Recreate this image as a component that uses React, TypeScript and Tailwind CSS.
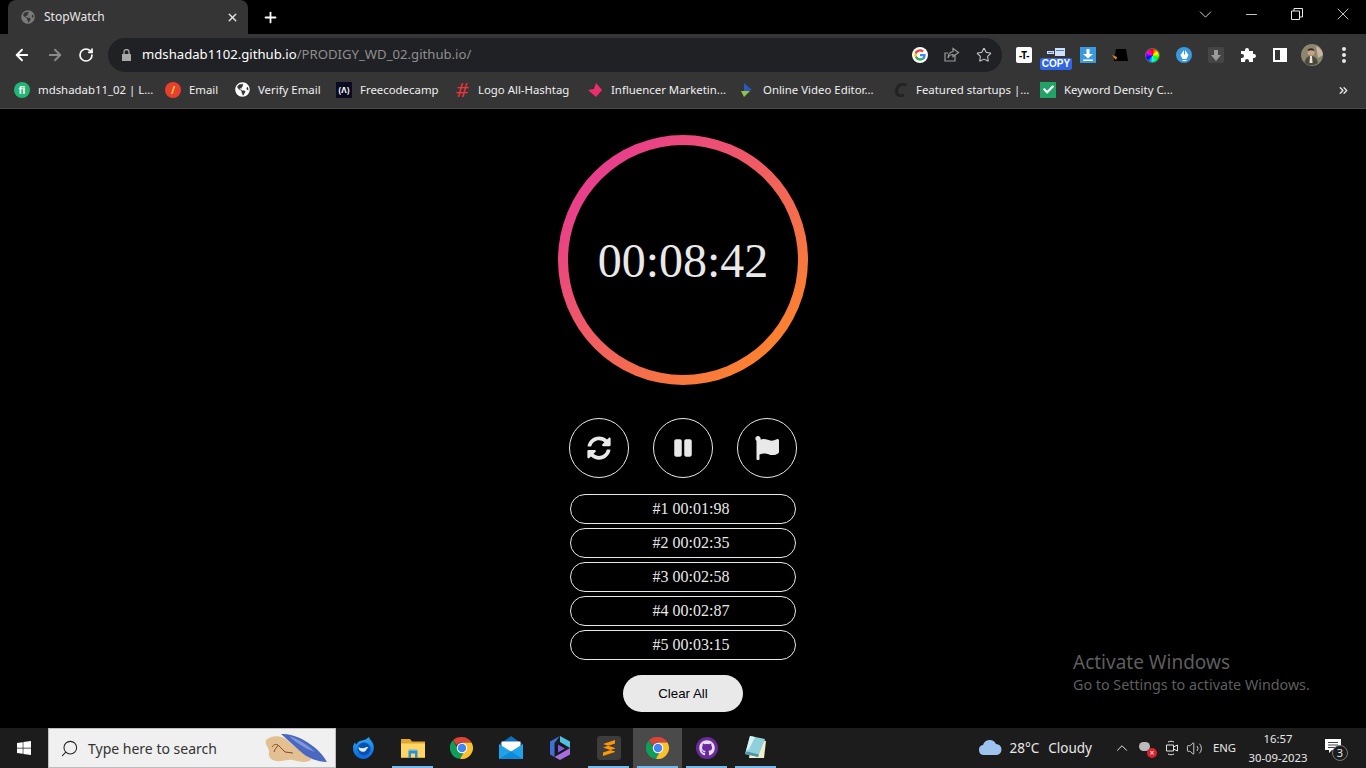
import { ArrowLeft, ArrowRight, RotateCw, Star, Search, ChevronUp, ChevronDown, Minus, X, Plus, ChevronsRight, Volume2 } from "lucide-react";
import { FaSyncAlt, FaPause, FaFlag, FaWindows, FaGithub, FaCheck, FaGlobeAmericas } from "react-icons/fa";

const laps = ["#1 00:01:98", "#2 00:02:35", "#3 00:02:58", "#4 00:02:87", "#5 00:03:15"];

// ── brand marks ─────────────────────────────────────────────────────────────

function GoogleG() {
  return (
    <svg width="16" height="16" viewBox="0 0 48 48">
      <circle cx="24" cy="24" r="24" fill="#fff" />
      <path fill="#4285f4" d="M41 24.5c0-1.3-.1-2.3-.3-3.5H24v6.5h9.6c-.4 2.3-1.7 4.2-3.6 5.5l5.6 4.3c3.3-3 5.4-7.5 5.4-12.8z" />
      <path fill="#34a853" d="M24 41c4.6 0 8.5-1.5 11.6-4.7L30 32c-1.600 1.100-3.600 1.800-6 1.800-4.500 0-8.400-3-9.700-7.200l-5.800 4.500C11.300 37 17.200 41 24 41z" />
      <path fill="#fbbc05" d="M14.300 26.600c-.7-2-.7-3.900 0-5.800l-5.800-4.500c-2.300 4.800-2.300 10 0 14.800z" />
      <path fill="#ea4335" d="M24 13.800c2.600 0 4.800.9 6.500 2.500l4.900-4.900C32.400 8.600 28.500 7 24 7 17.200 7 11.300 11 8.500 16.300l5.800 4.500c1.300-4.100 5.200-7 9.700-7z" />
    </svg>
  );
}

function ChromeLogo() {
  return (
    <svg width="24" height="24" viewBox="0 0 48 48">
      <path fill="#db4437" d="M24 2a22 22 0 0 1 19 11H24a11 11 0 0 0-10 6.500L6 8.500A22 22 0 0 1 24 2z" />
      <path fill="#0f9d58" d="M6 8.500l9 15.500a11 11 0 0 0 12.500 8.500L20 45.700A22 22 0 0 1 6 8.500z" />
      <path fill="#fbc02d" d="M43 13a22 22 0 0 1-23 32.700L29.500 29A11 11 0 0 0 24 13z" />
      <circle cx="24" cy="24" r="10.500" fill="#fff" />
      <circle cx="24" cy="24" r="8.500" fill="#4285f4" />
    </svg>
  );
}

function FirefoxDev() {
  return (
    <svg width="24" height="24" viewBox="0 0 24 24">
      <defs>
        <linearGradient id="ff" x1="0" y1="0" x2="0" y2="1">
          <stop offset="0" stopColor="#2aa8f5" />
          <stop offset="1" stopColor="#0a66dc" />
        </linearGradient>
      </defs>
      <path fill="url(#ff)" d="M17 1c.5 2.500 2 3 3.500 5.500 2 3.500 1.800 8.500-1 12C17 21.500 14 23 11.500 23 6 23 1 18.500 1 12.500 1 9.800 1.800 7.800 3 6.500c.3 1 .8 1.500 1.500 2C5.500 6 8 4.500 10 4.500c2.500-.3 5-1.500 7-3.500z" />
      <circle cx="12" cy="13" r="6.500" fill="#0b4fb0" />
      <path fill="#dff1ff" d="M6.500 11c2 1.500 5.500 1.500 7 .5 1-.7 2.500-.5 3 .5-1 0-1.500.5-2 1.500-1 2.500-4.500 3-6.500 1.200C7 13.800 6.500 12.500 6.500 11z" />
    </svg>
  );
}

function FolderIcon() {
  return (
    <svg width="24" height="24" viewBox="0 0 24 24">
      <path fill="#e0a82e" d="M0 3h9l2 2.500h13V22H0z" />
      <path fill="#ffd666" d="M0 7.500h24V21H0z" />
      <path fill="#2a8fd8" d="M7.500 15h9v7h-2.500v-4.500h-4V22H7.500z" />
      <path fill="#5fb6ee" d="M7.500 13.500h9V15h-9z" />
    </svg>
  );
}

function MailIcon() {
  return (
    <svg width="24" height="24" viewBox="0 0 24 24">
      <path fill="#0c6fc0" d="M12 0l12 8.500H0z" />
      <path fill="#fff" d="M2.500 5.500h19V11L12 16 2.500 11z" />
      <path fill="#1fa2e8" d="M0 8l12 7.500L24 8v15H0z" />
      <path fill="#0d8ad8" d="M0 23l12-7.500L24 23z" />
    </svg>
  );
}

function HexIcon() {
  return (
    <svg width="22" height="24" viewBox="0 0 22 24">
      <path fill="#3f6fd8" d="M11 0L1 5.500v13l4.500 2.500V7z" />
      <path fill="#4ec2e0" d="M11 0l10 5.500V12l-5-3-5-3z" />
      <path fill="#a56ee0" d="M21 12v6.500L11 24l-5.500-3 10.500-6z" />
      <path fill="#16161c" d="M6.500 9.500l4.500-2.500 5 2.800v4.700L11 17l-4.500-2.500z" />
      <path fill="#7a5cd8" d="M9 8.500l7 4-7 4z" />
    </svg>
  );
}

function SublimeIcon() {
  return (
    <div className="w-6 h-6 rounded-[3px] bg-[#3d3d3d] flex items-center justify-center">
      <svg width="14" height="16" viewBox="0 0 14 16">
        <path fill="#ff9800" d="M13 0v3.500L1 7.500V4zM1 7.500l12 4V8L1 4zM13 8.500V12L1 16v-3.500z" />
      </svg>
    </div>
  );
}

function NotepadIcon() {
  return (
    <svg width="24" height="26" viewBox="0 0 24 26">
      <path fill="#f2eeca" d="M8 3l14 3-2 17H5z" />
      <path fill="#8fd0dc" d="M6 1l15 3-7 18-13-3z" />
      <path fill="#d9f2f4" d="M6 1l5 1-6 12-3 2z" />
      <path fill="#4f93a8" d="M1 19l13 3 1-2.500-12-3z" />
    </svg>
  );
}

function SearchArt() {
  return (
    <svg width="66" height="32" viewBox="0 0 66 32">
      <path fill="#e3c092" d="M3 8c4-4 12-5 18-2 5 3 10 9 18 13 5 3 9 6 9 9-4 3-12 2-18 0-5-1-12 2-17 1-6-1-8-5-7-9 1-3-5-8-3-12z" />
      <path fill="none" stroke="#8a4a2a" strokeWidth="1" d="M9 15c2-3 4-3 6-2-1 3-3 3-4 7M15 13l7 7 8 1" />
      <path fill="#4a68bf" d="M18 2c10-1 24 5 33 13 5 4 9 8 13 15-9 0-20-4-27-11C30 13 24 7 18 2z" />
      <path fill="#7f98dc" d="M26 4c9 3 19 9 26 16-9-3-19-9-26-16z" />
    </svg>
  );
}

function CopyExt() {
  return (
    <div className="mt-[7px] flex flex-col items-center">
      <svg width="20" height="9" viewBox="0 0 20 9">
        <path fill="#cfe0f8" d="M1 3h7v3H1zM9 0h10v8H9z" />
        <path fill="#4a80d8" d="M10 2h8v1h-8zM2 4h5v1H2z" />
      </svg>
      <span className="mt-[1px] bg-[#2f66e6] text-white font-bold text-[10px] leading-[12px] px-[2px] rounded-[2px] [font-family:'Liberation_Sans',sans-serif]">COPY</span>
    </div>
  );
}

function ColorWheel() {
  return (
    <div className="w-[13px] h-[13px] rounded-full bg-[conic-gradient(#f00,#ff0,#0f0,#0ff,#00f,#f0f,#f00)] ring-1 ring-[#666]" />
  );
}

function Avatar() {
  return (
    <svg width="22" height="22" viewBox="0 0 22 22">
      <circle cx="11" cy="11" r="11" fill="#8a8670" />
      <path fill="#c9b6a0" d="M15 2a11 11 0 0 1 7 9l-5 3z" />
      <circle cx="10" cy="8" r="3.500" fill="#caa184" />
      <path fill="#2c2a24" d="M6.500 7c0-3 6-4 7 0-2-1-5-1-7 0z" />
      <path fill="#4b4a3a" d="M3.500 19c1-5 3-7 6.500-7s6 2 7 7a11 11 0 0 1-13.500 0z" />
      <path fill="#e8e2d8" d="M9 12h2l.5 7h-3z" />
    </svg>
  );
}

// ── browser chrome ──────────────────────────────────────────────────────────

const bookmarks = [
  { label: "mdshadab11_02 | L...", w: "w-[151px]", icon: <span className="w-4 h-4 rounded-full bg-[#22b573] text-white text-[10px] leading-4 text-center font-bold">fi</span> },
  { label: "Email", w: "w-[69px]", icon: <span className="w-4 h-4 rounded-full bg-[#e8402c] text-[#ffd34d] text-[10px] leading-4 text-center font-bold">/</span> },
  { label: "Verify Email", w: "w-[102px]", icon: <FaGlobeAmericas size={15} className="text-white" /> },
  { label: "Freecodecamp", w: "w-[118px]", icon: <span className="w-4 h-4 bg-[#0a0a23] text-white text-[8px] leading-4 text-center font-bold">(Λ)</span> },
  { label: "Logo All-Hashtag", w: "w-[133px]", icon: <span className="w-4 h-4 text-[#f0323c] text-[20px] leading-4 text-center italic">#</span> },
  { label: "Influencer Marketin...", w: "w-[152px]", icon: <svg width="16" height="16" viewBox="0 0 16 16"><path fill="#ee2d6e" d="M9 1l6 7-6 7-8-7 6-1z" /></svg> },
  { label: "Online Video Editor...", w: "w-[153px]", icon: <svg width="16" height="16" viewBox="0 0 16 16"><path fill="#2a57c8" d="M5 1l8 7-8 2z" /><path fill="#8cc63f" d="M2 9h9l-6 6z" /></svg> },
  { label: "Featured startups |...", w: "w-[148px]", icon: <span className="w-4 h-4 text-[#222] text-[20px] leading-4 text-center italic font-bold">C</span> },
  { label: "Keyword Density C...", w: "w-[150px]", icon: <span className="w-4 h-4 bg-[#21a366] flex items-center justify-center"><FaCheck size={11} className="text-white" /></span> },
];

function ExtCell({ children }: { children: React.ReactNode }) {
  return <div className="w-8 h-[34px] flex items-center justify-center shrink-0">{children}</div>;
}

function TitleBar() {
  return (
    <div className="h-[34px] bg-black flex relative">
      <div className="ml-2 w-[240px] h-[34px] bg-[#353535] rounded-t-lg flex items-center pl-[13px] pr-[9px]">
        <FaGlobeAmericas size={14} className="text-[#7a7a7a]" />
        <span className="ml-[9px] text-xs text-[#e8e8e8] flex-1">StopWatch</span>
        <X size={13} strokeWidth={2.5} className="text-[#e3e3e3]" />
      </div>
      <Plus size={17} strokeWidth={2.5} className="ml-[14px] mt-[9px] text-white" />
      <div className="flex-1" />
      <div className="flex items-center h-7 text-[#e8e8e8]">
        <div className="w-[46px] flex justify-center"><ChevronDown size={21} strokeWidth={1} /></div>
        <div className="w-[46px] flex justify-center"><Minus size={17} strokeWidth={1.2} /></div>
        <div className="w-[46px] flex justify-center">
          <svg width="12" height="12" viewBox="0 0 12 12" fill="none" stroke="currentColor">
            <path d="M.5 3h8v8.500h-8zM3 3V.5h8.500V9H9" />
          </svg>
        </div>
        <div className="w-[46px] flex justify-center"><X size={20} strokeWidth={1} /></div>
      </div>
    </div>
  );
}

function Toolbar() {
  return (
    <div className="h-[38px] bg-[#353535] flex items-end">
      <div className="w-[108px] h-[34px] flex items-center pl-[13px]">
        <ArrowLeft size={18} strokeWidth={2.5} className="text-white" />
        <ArrowRight size={18} strokeWidth={2.5} className="ml-[15px] text-[#8a8a8a]" />
        <RotateCw size={16} strokeWidth={2.5} className="ml-[14px] text-white" />
      </div>
      <div className="w-[894px] h-[34px] rounded-full bg-[#202124] flex items-center pl-[14px] pr-[10px]">
        <svg width="9" height="12" viewBox="0 0 9 12" fill="#a8a8a8">
          <path d="M0 5h9v7H0z" />
          <path d="M2 5V3a2.500 2.500 0 0 1 5 0v2" fill="none" stroke="#a8a8a8" strokeWidth="1.300" />
        </svg>
        <span className="ml-[11px] flex-1 text-[13.15px] text-white">
          mdshadab1102.github.io<span className="text-[#8f8f8f]">/PRODIGY_WD_02.github.io/</span>
        </span>
        <GoogleG />
        <svg width="16" height="16" viewBox="0 0 16 16" fill="none" stroke="#9a9a9a" strokeWidth="1.200" className="ml-4">
          <path d="M11 7.500V14H1V6h3M9 1.500l5.500 4-5.500 4V7.500C6.500 7.500 5 8.500 4 11c0-4 2-6 5-6.500z" />
        </svg>
        <Star size={16} strokeWidth={1.600} className="ml-4 text-[#c8c8c8]" />
      </div>
      <div className="h-[34px] flex items-center pl-[6px]">
        <ExtCell>
          <span className="w-4 h-4 rounded-[2px] bg-white text-black text-[10px] leading-4 text-center font-bold tracking-tighter">-T-</span>
        </ExtCell>
        <ExtCell><CopyExt /></ExtCell>
        <ExtCell>
          <span className="w-4 h-4 bg-[#3a9ae0] flex items-center justify-center">
            <svg width="10" height="12" viewBox="0 0 10 12"><path fill="#fff" d="M3.500 0h3v5H10L5 9.500 0 5h3.500zM0 10.500h10V12H0z" /></svg>
          </span>
        </ExtCell>
        <ExtCell>
          <svg width="16" height="12" viewBox="0 0 16 12"><path fill="#000" d="M4 0h10l2 12H2z" /><path fill="#f28a1a" d="M0 6l5 2-1 3z" /></svg>
        </ExtCell>
        <ExtCell><ColorWheel /></ExtCell>
        <ExtCell>
          <span className="w-4 h-4 rounded-full bg-[#3a9ae0] flex items-center justify-center">
            <svg width="9" height="11" viewBox="0 0 9 11"><path fill="#fff" d="M4 0v4.500h1V0l3.500 5L6.500 9h-4L.5 5zM2.500 10h4v1h-4z" /></svg>
          </span>
        </ExtCell>
        <ExtCell>
          <span className="w-4 h-4 rounded-[2px] bg-[#454545] flex items-center justify-center">
            <svg width="10" height="11" viewBox="0 0 10 11"><path fill="#9a9a9a" d="M3 0h4v5h3l-5 6-5-6h3z" /></svg>
          </span>
        </ExtCell>
        <ExtCell>
          <svg width="16" height="16" viewBox="0 0 16 16">
            <path fill="#fff" d="M5 3a2 2 0 0 1 4 0v1h4v3h1a2 2 0 0 1 0 4h-1v4H9v-1a2 2 0 0 0-4 0v1H1v-4h1a2 2 0 0 0 0-4H1V4h4z" />
          </svg>
        </ExtCell>
        <ExtCell>
          <span className="w-[14px] h-[14px] border-2 border-white flex justify-end"><span className="w-[5px] bg-white" /></span>
        </ExtCell>
        <ExtCell><Avatar /></ExtCell>
        <ExtCell>
          <span className="flex flex-col gap-[2.500px]">
            <span className="w-[3.500px] h-[3.500px] rounded-full bg-[#e8e8e8]" />
            <span className="w-[3.500px] h-[3.500px] rounded-full bg-[#e8e8e8]" />
            <span className="w-[3.500px] h-[3.500px] rounded-full bg-[#e8e8e8]" />
          </span>
        </ExtCell>
      </div>
    </div>
  );
}

function BookmarkBar() {
  return (
    <div className="h-[37px] bg-[#353535] border-b border-[#4c4c4c] flex items-center pl-[14px] relative">
      {bookmarks.map((b) => (
        <div key={b.label} className={`${b.w} flex items-center gap-2 shrink-0`}>
          <span className="w-4 h-4 flex items-center justify-center shrink-0">{b.icon}</span>
          <span className="text-[11.4px] text-[#f0f0f0] whitespace-nowrap">{b.label}</span>
        </div>
      ))}
      <ChevronsRight size={13} strokeWidth={2.500} className="absolute left-[1337px] text-[#e8e8e8]" />
    </div>
  );
}

// ── stopwatch page ──────────────────────────────────────────────────────────

function RoundButton({ children, className = "" }: { children: React.ReactNode; className?: string }) {
  return (
    <button className={`w-[60px] h-[60px] rounded-full border border-[#e9e9e9] flex items-center justify-center text-[#e9e9e9] ${className}`}>
      {children}
    </button>
  );
}

function Stopwatch() {
  return (
    <main className="flex-1 bg-black flex flex-col items-center pt-[26px] [font-family:'Liberation_Serif',serif] relative">
      <div className="w-[250px] h-[250px] rounded-full p-[10px] bg-linear-to-br/srgb from-[#e83e8c] from-15% to-[#fb8130] to-85%">
        <div className="w-full h-full rounded-full bg-black flex items-center justify-center pt-[2px] text-[48px] text-[#e9e9e9]">
          00:08:42
        </div>
      </div>

      <div className="mt-[33px] flex gap-6">
        <RoundButton><FaSyncAlt size={24} /></RoundButton>
        <RoundButton><FaPause size={20} /></RoundButton>
        <RoundButton><FaFlag size={24} /></RoundButton>
      </div>

      <div className="mt-4 flex flex-col gap-1">
        {laps.map((lap) => (
          <div key={lap} className="w-[226px] h-[30px] rounded-full border border-[#e9e9e9] flex items-center justify-center pl-4 text-base text-[#e9e9e9]">
            {lap}
          </div>
        ))}
      </div>

      <button className="mt-[15px] w-[120px] h-[37px] rounded-full bg-[#e9e9e9] text-black text-[13.3px] [font-family:'Liberation_Sans',sans-serif]">
        Clear All
      </button>

      {/* windows watermark */}
      <div className="absolute left-[1073px] top-[541px] text-[#5e5e5e] font-['Noto_Sans',sans-serif]">
        <div className="text-[19px] leading-6">Activate Windows</div>
        <div className="text-[14.3px] leading-[22px]">Go to Settings to activate Windows.</div>
      </div>
    </main>
  );
}

// ── taskbar ─────────────────────────────────────────────────────────────────

const pinned = [
  { id: "firefox", icon: <FirefoxDev />, open: false, active: false },
  { id: "folder", icon: <FolderIcon />, open: true, active: false },
  { id: "chrome", icon: <ChromeLogo />, open: false, active: false },
  { id: "mail", icon: <MailIcon />, open: false, active: false },
  { id: "hex", icon: <HexIcon />, open: false, active: false },
  { id: "sublime", icon: <SublimeIcon />, open: true, active: false },
  { id: "chrome2", icon: <ChromeLogo />, open: true, active: true },
  { id: "github", icon: <span className="w-[22px] h-[22px] rounded-full bg-[#6a2a9c] flex items-center justify-center"><FaGithub size={16} className="text-[#e8dcf0]" /></span>, open: true, active: false },
  { id: "notepad", icon: <NotepadIcon />, open: true, active: false },
];

function Taskbar() {
  return (
    <div className="h-10 bg-[#1c1c1c] flex items-center text-[#e8e8e8]">
      <div className="w-12 flex justify-center"><FaWindows size={16} className="text-white" /></div>
      <div className="w-[288px] h-10 bg-[#f0f0f0] border border-[#bdbdbd] flex items-center pl-[11px] pr-[6px]">
        <Search size={19} strokeWidth={1.300} className="text-[#222] -scale-x-100" />
        <span className="ml-[9px] flex-1 text-[14px] text-[#333]">Type here to search</span>
        <SearchArt />
      </div>
      <div className="ml-[3px] flex">
        {pinned.map((p) => (
          <div key={p.id} className={`w-[49px] h-10 flex items-center justify-center relative ${p.active ? "bg-[#4a4a4a]" : ""}`}>
            {p.icon}
            {p.open && <span className="absolute bottom-0 left-1 right-1 h-[2px] bg-[#76b9ed]" />}
          </div>
        ))}
      </div>
      <div className="flex-1" />
      <svg width="24" height="16" viewBox="0 0 24 16" className="-mt-[2px]">
        <path fill="#9cc4ee" d="M6 16a5 5 0 0 1-1-9.900A7 7 0 0 1 18 5a5.500 5.500 0 0 1 0 11z" />
      </svg>
      <span className="ml-2 text-[13.500px]">28°C</span>
      <span className="ml-[9px] text-[13.500px]">Cloudy</span>
      <ChevronUp size={18} strokeWidth={1.300} className="ml-[21px]" />
      <span className="ml-[8px] w-4 h-4 relative">
        <span className="absolute left-0 top-[2px] w-[11px] h-[9px] rounded-full bg-[#bbb]" />
        <span className="absolute right-[-2px] bottom-[-2px] w-[10px] h-[10px] rounded-full bg-[#e0202c] text-white text-[8px] leading-[10px] text-center">×</span>
      </span>
      <svg width="14" height="18" viewBox="0 0 14 18" fill="none" stroke="#e8e8e8" className="ml-[10px]">
        <path d="M1.500 6h7v6h-7zM8.500 8l4-2v6l-4-2M3 3c2-1 4-1 6 0M3 15c2 1 4 1 6 0" />
      </svg>
      <Volume2 size={17} strokeWidth={1.200} className="ml-[7px]" />
      <span className="ml-[10px] w-[23px] text-[11.300px]">ENG</span>
      <div className="w-[84px] flex flex-col items-center text-[11.300px] leading-[19px]">
        <span>16:57</span>
        <span>30-09-2023</span>
      </div>
      <div className="ml-[5px] mr-[21px] w-5 h-5 relative">
        <svg width="16" height="15" viewBox="0 0 16 15" className="mt-[1px]">
          <path fill="#fff" d="M0 0h16v11H7l-3 3v-3H0z" />
          <path fill="#444" d="M3 3h10v1H3zM3 5.500h10v1H3zM3 8h7v1H3z" />
        </svg>
        <span className="absolute left-[7px] top-[7px] w-[16px] h-[16px] rounded-full bg-[#1c1c1c] border border-[#777] text-[11px] leading-[14px] text-center">3</span>
      </div>
    </div>
  );
}

export default function App() {
  return (
    <div className="w-[1366px] h-screen overflow-hidden flex flex-col font-['Noto_Sans',sans-serif]">
      <TitleBar />
      <Toolbar />
      <BookmarkBar />
      <Stopwatch />
      <Taskbar />
    </div>
  );
}
